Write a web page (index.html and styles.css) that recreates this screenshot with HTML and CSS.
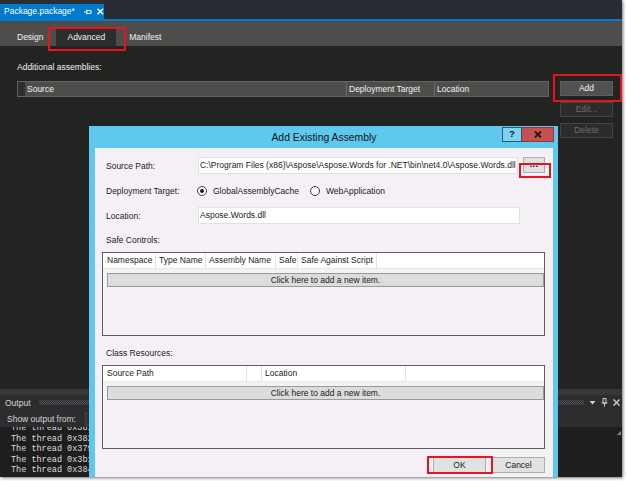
FILE: index.html
```html
<!DOCTYPE html>
<html>
<head>
<meta charset="utf-8">
<link rel="stylesheet" href="styles.css">
</head>
<body>
<div class="frame">
  <div class="doctabs">
    <div class="doctab">
      <span class="doctab-title">Package.package*</span>
      <svg class="tab-pin" width="9" height="8" viewBox="0 0 9 8"><path d="M0 4h3M3 1.5v5M3 2.5h4.5v3H3" fill="none" stroke="#fff" stroke-width="1"/></svg>
      <svg class="tab-close" width="7" height="7" viewBox="0 0 7 7"><path d="M0.5 0.5l6 6M6.5 0.5l-6 6" stroke="#fff" stroke-width="1.5"/></svg>
    </div>
  </div>
  <div class="docline"></div>
  <div class="subtabs">
    <div class="subtab">Design</div>
    <div class="subtab active">Advanced</div>
    <div class="subtab">Manifest</div>
  </div>
  <div class="editor">
    <div class="editor-label">Additional assemblies:</div>
    <div class="assemblies">
      <div class="vsgrid-header">
        <div class="gutter"></div>
        <div class="col col-source">Source</div>
        <div class="col col-target">Deployment Target</div>
        <div class="col col-loc">Location</div>
      </div>
      <div class="side-buttons">
        <div class="vsbtn">Add</div>
        <div class="vsbtn disabled">Edit...</div>
        <div class="vsbtn disabled">Delete</div>
      </div>
    </div>
  </div>
  <div class="output">
    <div class="output-split"></div>
    <div class="output-header">
      <span class="output-title">Output</span>
      <div class="grip"></div>
      <svg class="hdr-icon" width="7" height="5" viewBox="0 0 7 5"><path d="M0.5 1h6L3.5 4.5z" fill="#d0d0d0"/></svg>
      <svg class="hdr-icon" width="7" height="9" viewBox="0 0 7 9"><path d="M2 0.5h3v4.5H2zM0.5 5h6M3.5 5v3.5" fill="none" stroke="#d0d0d0" stroke-width="1"/></svg>
      <svg class="hdr-icon" width="7" height="7" viewBox="0 0 7 7"><path d="M0.5 0.5l6 6M6.5 0.5l-6 6" stroke="#d0d0d0" stroke-width="1.4"/></svg>
    </div>
    <div class="output-toolbar">
      <span>Show output from:</span>
      <div class="combo"></div>
    </div>
    <div class="output-text">
      <div class="lines">The thread 0x3810 has exited with code 0 (0x0).
The thread 0x382c has exited with code 0 (0x0).
The thread 0x3798 has exited with code 0 (0x0).
The thread 0x3b1c has exited with code 0 (0x0).
The thread 0x384c has exited with code 0 (0x0).</div>
      <div class="scrollbar">
        <svg width="4" height="4" viewBox="0 0 4 4"><path d="M4 0V4H0z" fill="#8a8a8a"/></svg>
      </div>
    </div>
  </div>

  <div class="dialog">
    <div class="titlebar">
      <div></div>
      <div class="dlg-title">Add Existing Assembly</div>
      <div class="caption-btns">
        <div class="cap-help">?</div>
        <div class="cap-close">
          <svg width="8" height="7" viewBox="0 0 8 7"><path d="M1 0.5l6 6M7 0.5l-6 6" stroke="#1a1a1a" stroke-width="1.8"/></svg>
        </div>
      </div>
    </div>
    <div class="client">
      <div class="form">
        <div class="lbl">Source Path:</div>
        <div class="field">C:\Program Files (x86)\Aspose\Aspose.Words for .NET\bin\net4.0\Aspose.Words.dll</div>
        <div class="browse">...</div>

        <div class="lbl">Deployment Target:</div>
        <div class="radios">
          <span class="radio on"></span><span class="radio-text">GlobalAssemblyCache</span>
          <span class="radio"></span><span class="radio-text">WebApplication</span>
        </div>

        <div class="lbl">Location:</div>
        <div class="field field-loc">Aspose.Words.dll</div>
      </div>

      <div class="section-label first">Safe Controls:</div>
      <div class="dgrid">
        <div class="dgrid-head">
          <div class="hcell w-ns">Namespace</div>
          <div class="hcell w-type">Type Name</div>
          <div class="hcell w-asm">Assembly Name</div>
          <div class="hcell w-safe">Safe</div>
          <div class="hcell w-script">Safe Against Script</div>
          <div class="hcell fill"></div>
        </div>
        <div class="dgrid-new">Click here to add a new item.</div>
      </div>

      <div class="section-label">Class Resources:</div>
      <div class="dgrid">
        <div class="dgrid-head">
          <div class="hcell w-path">Source Path</div>
          <div class="hcell w-gap"></div>
          <div class="hcell w-loc">Location</div>
          <div class="hcell fill"></div>
        </div>
        <div class="dgrid-new">Click here to add a new item.</div>
      </div>

      <div class="dlg-buttons">
        <div class="dlg-btn">OK</div>
        <div class="dlg-btn">Cancel</div>
      </div>
    </div>
  </div>

  <div class="mark mark-adv"></div>
  <div class="mark mark-add"></div>
  <div class="mark mark-browse"></div>
  <div class="mark mark-ok"></div>
</div>
</body>
</html>
```

FILE: styles.css
```css
html, body {
  margin: 0;
  padding: 0;
}
body {
  width: 627px;
  height: 481px;
  background: #ffffff;
  overflow: hidden;
  font-family: "Liberation Sans", Arial, sans-serif;
  font-size: 8.5px;
}
.frame {
  position: relative;
  width: 622px;
  height: 477px;
  background: #222422;
  display: flex;
  flex-direction: column;
  overflow: hidden;
  box-shadow: 1px 1px 3px rgba(0, 0, 0, 0.55);
}

/* document tab strip */
.doctabs {
  height: 19px;
  flex-shrink: 0;
  background: #292c32;
  display: flex;
  align-items: flex-end;
}
.doctab {
  width: 104px;
  height: 15px;
  box-sizing: border-box;
  background: #007acc;
  color: #ffffff;
  display: flex;
  align-items: center;
  padding-left: 4px;
}
.doctab-title {
  line-height: 15px;
}
.tab-pin {
  margin-left: 9px;
}
.tab-close {
  margin-left: 5px;
}
.docline {
  height: 2px;
  flex-shrink: 0;
  background: #007acc;
}

/* designer sub tabs */
.subtabs {
  height: 25px;
  flex-shrink: 0;
  background: #4d4e4b;
  display: flex;
  align-items: flex-end;
  padding-left: 10px;
  gap: 6px;
}
.subtab {
  height: 18px;
  line-height: 18px;
  padding: 0 7px;
  color: #f1f1f1;
}
.subtab.active {
  background: #2d2d2d;
  padding: 0 11px;
}

/* editor */
.editor {
  flex: 1;
  padding: 15px 9px 0 17px;
  color: #f1f1f1;
}
.editor-label {
  line-height: 12px;
}
.assemblies {
  display: flex;
  align-items: flex-start;
  gap: 11px;
  margin-top: 8px;
}
.vsgrid-header {
  flex: 1;
  height: 16px;
  box-sizing: border-box;
  display: flex;
  background: #4d4e4b;
  border: 1px solid #62635f;
}
.gutter {
  width: 7px;
  background: #2e2f2d;
}
.col {
  line-height: 14px;
  padding-left: 2px;
  box-sizing: border-box;
  white-space: nowrap;
}
.col-source {
  width: 321px;
}
.col-target {
  width: 88px;
  border-left: 1px solid #6a6b67;
}
.col-loc {
  flex: 1;
  border-left: 1px solid #6a6b67;
}
.side-buttons {
  width: 53px;
  display: flex;
  flex-direction: column;
  gap: 6px;
}
.vsbtn {
  height: 15px;
  box-sizing: border-box;
  line-height: 13px;
  text-align: center;
  background: #515151;
  border: 1px solid #5f5f5f;
  color: #f4f4f4;
}
.vsbtn.disabled {
  background: #2c2c2c;
  border-color: #444444;
  color: #6b6b6b;
}

/* output tool window */
.output {
  height: 88px;
  flex-shrink: 0;
  display: flex;
  flex-direction: column;
  background: #2d2d30;
  color: #d6d6d6;
}
.output-split {
  height: 6px;
  background: #37373b;
}
.output-header {
  height: 15px;
  display: flex;
  align-items: center;
  gap: 5px;
  padding: 0 2px 0 5px;
}
.grip {
  flex: 1;
  height: 5px;
  margin-left: 3px;
  background-image: conic-gradient(#505055 25%, transparent 0 50%, #505055 0 75%, transparent 0);
  background-size: 2px 2px;
}
.output-toolbar {
  height: 17px;
  display: flex;
  align-items: center;
  gap: 9px;
  padding-left: 7px;
}
.combo {
  width: 140px;
  height: 14px;
  box-sizing: border-box;
  border: 1px solid #434346;
  background: #333337;
}
.output-text {
  flex: 1;
  display: flex;
  background: #1e1e1e;
  overflow: hidden;
}
.lines {
  flex: 1;
  margin-top: -4px;
  padding-left: 11px;
  font-family: "Liberation Mono", "Courier New", monospace;
  font-size: 8.5px;
  line-height: 10.6px;
  color: #dcdcdc;
  white-space: pre;
}
.scrollbar {
  width: 7px;
  padding-top: 4px;
  display: flex;
  justify-content: center;
  align-items: flex-start;
}

/* dialog */
.dialog {
  position: absolute;
  left: 89px;
  top: 126px;
  width: 469px;
  height: 360px;
  box-sizing: border-box;
  padding: 0 5px 0 6px;
  background: #5fc8ee;
  display: flex;
  flex-direction: column;
}
.titlebar {
  height: 22px;
  flex-shrink: 0;
  display: grid;
  grid-template-columns: 1fr auto 1fr;
  align-items: center;
}
.dlg-title {
  font-size: 10.4px;
  color: #141414;
}
.caption-btns {
  justify-self: end;
  align-self: start;
  margin-top: 1px;
  margin-right: -1px;
  display: flex;
}
.cap-help {
  width: 20px;
  height: 15px;
  box-sizing: border-box;
  border: 1px solid #2a5c78;
  background: #7fd3f2;
  text-align: center;
  font-weight: bold;
  font-size: 9px;
  line-height: 13px;
  color: #111;
}
.cap-close {
  width: 32px;
  height: 15px;
  box-sizing: border-box;
  border: 1px solid #8f3b3b;
  border-left: none;
  background: #c75050;
  display: flex;
  align-items: center;
  justify-content: center;
}
.client {
  flex: 1;
  background: #f5f0f5;
  padding: 9px 8px 0 7px;
  color: #1b1b1b;
}
.form {
  display: grid;
  grid-template-columns: 87px 320px 22px;
  grid-auto-rows: 17px;
  column-gap: 5px;
  row-gap: 8px;
  margin-left: 4px;
  align-items: center;
}
.lbl {
  white-space: nowrap;
}
.field {
  height: 17px;
  box-sizing: border-box;
  background: #ffffff;
  border: 1px solid #e1e1e1;
  line-height: 15px;
  padding-left: 1px;
  white-space: nowrap;
  overflow: hidden;
}
.field-loc {
  grid-column: 2 / 4;
  width: 322px;
}
.browse {
  height: 16px;
  box-sizing: border-box;
  align-self: start;
  background: #e1e1e1;
  border: 1px solid #adadad;
  text-align: center;
  line-height: 13px;
  font-size: 9px;
  font-weight: bold;
  letter-spacing: 0.3px;
  color: #000;
}
.radios {
  grid-column: 2 / 4;
  display: flex;
  align-items: center;
  margin-left: -1px;
}
.radio {
  width: 10px;
  height: 10px;
  box-sizing: border-box;
  border-radius: 50%;
  border: 1px solid #3a3a3a;
  background: #ffffff;
  display: flex;
  align-items: center;
  justify-content: center;
}
.radio.on::after {
  content: "";
  width: 4px;
  height: 4px;
  border-radius: 50%;
  background: #1a1a1a;
}
.radio-text {
  margin-left: 6px;
  margin-right: 11px;
}
.section-label {
  margin-left: 4px;
  margin-top: 11px;
  line-height: 12px;
}
.section-label.first {
  margin-top: 10px;
}
.dgrid {
  margin-top: 6px;
  height: 84px;
  box-sizing: border-box;
  border: 1px solid #5e5e5e;
  background: #f6f1f6;
}
.dgrid-head {
  height: 16px;
  box-sizing: border-box;
  display: flex;
  background: #ffffff;
  border-bottom: 1px solid #ebe7eb;
}
.hcell {
  box-sizing: border-box;
  line-height: 15px;
  padding-left: 4px;
  border-right: 1px solid #e2e2e2;
  white-space: nowrap;
  overflow: hidden;
}
.hcell.fill {
  flex: 1;
  border-right: none;
}
.w-ns { width: 53px; }
.w-type { width: 50px; padding-left: 3px; }
.w-asm { width: 70px; padding-left: 3px; }
.w-safe { width: 22px; padding-left: 3px; }
.w-script { width: 79px; padding-left: 3px; }
.w-path { width: 144px; }
.w-gap { width: 15px; }
.w-loc { width: 144px; padding-left: 3px; }
.dgrid-new {
  margin: 4px 0 0 4px;
  height: 14px;
  box-sizing: border-box;
  background: #dcdcdc;
  border: 1px solid #9a9a9a;
  text-align: center;
  line-height: 12px;
}
.dlg-buttons {
  display: flex;
  justify-content: flex-end;
  gap: 6px;
  margin-top: 8px;
}
.dlg-btn {
  width: 53px;
  height: 16px;
  box-sizing: border-box;
  background: #e1e1e1;
  border: 1px solid #adadad;
  text-align: center;
  line-height: 14px;
}

/* red annotation boxes */
.mark {
  position: absolute;
  box-sizing: border-box;
  border: 2px solid #e8131e;
}
.mark-adv { left: 48px; top: 27px; width: 78px; height: 24px; }
.mark-add { left: 553px; top: 74px; width: 69px; height: 28px; }
.mark-browse { left: 519px; top: 163px; width: 32px; height: 15px; }
.mark-ok { left: 427px; top: 456px; width: 66px; height: 18px; }
```
